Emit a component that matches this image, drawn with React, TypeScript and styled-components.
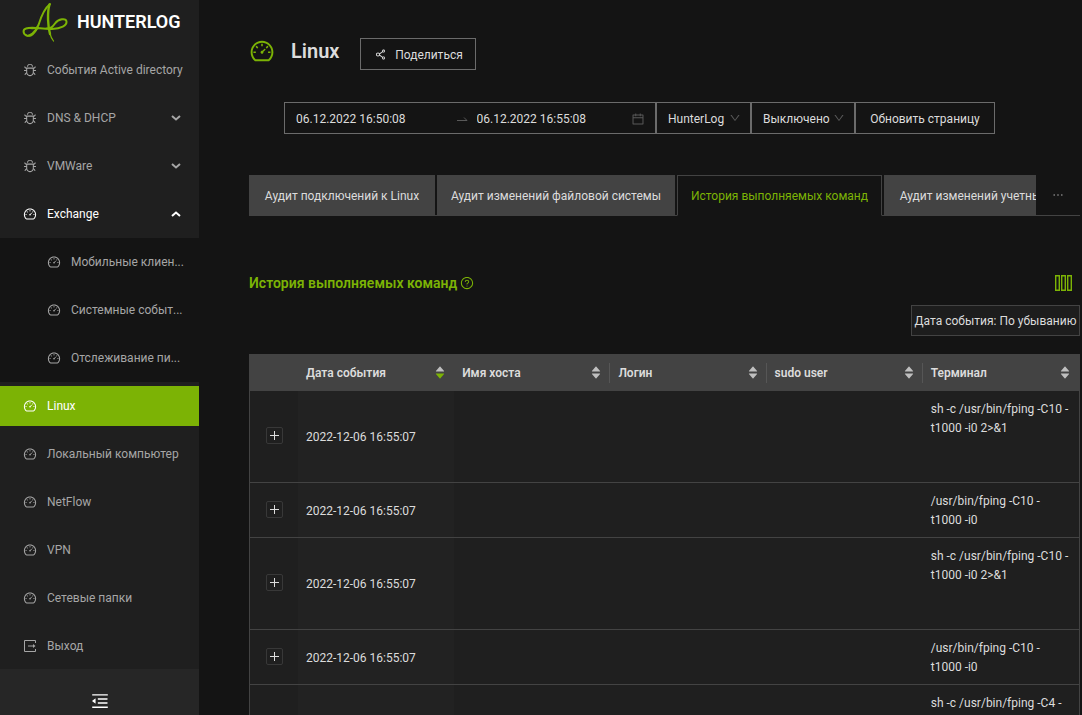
import React from "react";
import styled, { createGlobalStyle, css } from "styled-components";
import {
  AiFillCaretDown,
  AiFillCaretUp,
  AiOutlineBug,
  AiOutlineCalendar,
  AiOutlineDashboard,
  AiOutlineDown,
  AiOutlineEllipsis,
  AiOutlineMenuFold,
  AiOutlineQuestionCircle,
  AiOutlineShareAlt,
} from "react-icons/ai";

const green = "#7cb305";
const line = "#434343";
const control = "#6b6b6b";
const textColor = "#dcdcdc";

const GlobalStyle = createGlobalStyle`
  *, *::before, *::after { box-sizing: border-box; }
  body {
    margin: 0;
    background: #141414;
    color: ${textColor};
    font: 12px/20px Roboto, "Open Sans", sans-serif;
  }
  button, input, select { font: inherit; color: inherit; }
  button { cursor: pointer; }
  svg { display: block; flex: none; }
`;

const Page = styled.div`
  display: flex;
  height: 100vh;
  overflow: hidden;
`;

/* Sidebar */

const Sidebar = styled.aside`
  flex: none;
  display: flex;
  flex-direction: column;
  width: 199px;
  background: #1f1f1f;
`;

const Brand = styled.a`
  flex: none;
  display: flex;
  align-items: center;
  gap: 8px;
  height: 46px;
  padding: 0 0 2px 22px;
  color: #fff;
  font-size: 18px;
  font-weight: 600;
  text-decoration: none;
`;

const Menu = styled.ul`
  flex: none;
  margin: 0;
  padding: 0;
  list-style: none;
`;

const SubMenu = styled(Menu)`
  background: #141414;
`;

const MenuItem = styled.a<{ $nested?: boolean; $active?: boolean; $open?: boolean }>`
  display: flex;
  align-items: center;
  gap: 10px;
  height: 40px;
  padding: 0 18px 0 ${(p) => (p.$nested ? 47 : 23)}px;
  border-top: 4px solid transparent;
  border-bottom: 4px solid transparent;
  box-sizing: content-box;
  background: ${(p) => (p.$active ? green : "transparent")};
  background-clip: padding-box;
  color: ${(p) => (p.$active || p.$open ? "#fff" : "#a6a6a6")};
  text-decoration: none;
  white-space: nowrap;
`;

const MenuLabel = styled.span`
  flex: 1;
`;

const Collapse = styled.button`
  flex: none;
  display: flex;
  align-items: center;
  justify-content: center;
  height: 64px;
  margin-top: -1px;
  padding: 0;
  border: 0;
  background: #262626;
  color: #fff;
`;

/* Main column */

const Main = styled.main`
  flex: 1;
  min-width: 0;
  padding: 38px 2px 0 50px;
`;

const TitleRow = styled.header`
  display: flex;
  align-items: center;
  height: 32px;
`;

const PageTitle = styled.h1`
  margin: 0 21px 6px 16px;
  font-size: 20px;
  line-height: 26px;
  font-weight: 600;
`;

const TitleIcon = styled.span`
  margin-bottom: 6px;
  color: ${green};
`;

const Button = styled.button<{ $width: number }>`
  display: flex;
  align-items: center;
  justify-content: center;
  gap: 8px;
  width: ${(p) => p.$width}px;
  height: 32px;
  padding: 1px 0 0;
  border: 1px solid ${control};
  background: transparent;
  white-space: nowrap;
`;

const Filters = styled.form`
  display: flex;
  margin: 32px 0 0 35px;
`;

const RangePicker = styled.div`
  display: flex;
  align-items: center;
  width: 372px;
  height: 32px;
  padding: 1px 10px 0 11px;
  border: 1px solid ${control};
  color: #595959;
`;

const DateInput = styled.input`
  flex: 1;
  min-width: 0;
  padding: 0;
  border: 0;
  outline: 0;
  background: transparent;
  color: ${textColor};
`;

const Arrow = styled.span`
  padding: 0 9px 0 5px;
`;

const SelectBox = styled.div<{ $width: number }>`
  display: flex;
  position: relative;
  width: ${(p) => p.$width}px;
  height: 32px;
  color: #595959;

  select {
    width: 100%;
    padding: 1px 11px 0;
    border: 1px solid ${control};
    border-radius: 0;
    outline: 0;
    appearance: none;
    background: transparent;
    color: ${textColor};
  }

  svg {
    position: absolute;
    top: 10px;
    right: 10px;
    pointer-events: none;
  }
`;

const TabBar = styled.div`
  display: flex;
  height: 41px;
  margin-top: 41px;
  border-bottom: 1px solid ${line};
`;

const Tabs = styled.div`
  flex: 1;
  display: flex;
  gap: 2px;
  height: 41px;
  min-width: 0;
  overflow: hidden;
`;

const Tab = styled.button<{ $width: number; $active?: boolean }>`
  flex: none;
  width: ${(p) => p.$width}px;
  height: 41px;
  padding: 1px 0 0;
  border: 1px solid ${line};
  background: ${line};
  white-space: nowrap;
  ${(p) =>
    p.$active &&
    css`
      border-bottom-color: #141414;
      background: #141414;
      color: ${green};
    `}
`;

const MoreTabs = styled.button`
  display: flex;
  align-items: center;
  justify-content: center;
  width: 44px;
  padding: 0;
  border: 0;
  background: transparent;
  color: #a6a6a6;
`;

const SectionHead = styled.div`
  display: flex;
  align-items: center;
  justify-content: space-between;
  height: 20px;
  margin-top: 57px;
  padding-right: 8px;
  color: ${green};
`;

const SectionTitle = styled.h2`
  display: flex;
  align-items: center;
  gap: 3px;
  margin: 0;
  font-size: 14px;
  font-weight: 600;
  white-space: nowrap;
`;

const IconButton = styled.button`
  padding: 0;
  border: 0;
  background: transparent;
`;

const SortRow = styled.div`
  display: flex;
  justify-content: flex-end;
  margin: 12px 0 18px;
`;

const SortTag = styled.button`
  width: 169px;
  height: 31px;
  padding: 1px 0 0;
  border: 1px solid ${line};
  background: #1d1d1d;
  white-space: nowrap;
`;

/* Table */

const Table = styled.table`
  width: 100%;
  table-layout: fixed;
  border-collapse: separate;
  border-spacing: 0;
  border: solid ${line};
  border-width: 0 1px;
  background: #1f1f1f;
  line-height: 19px;
`;

const HeadCell = styled.th<{ $divided?: boolean; $narrow?: boolean }>`
  width: ${(p) => (p.$narrow ? "48px" : "auto")};
  height: 37px;
  padding: 0;
  background: ${line};
  font-weight: 600;
  line-height: 20px;
  text-align: left;

  > div {
    display: flex;
    align-items: center;
    justify-content: space-between;
    height: 20px;
    padding: 0 7px 0 8px;
    border-right: 1px solid ${(p) => (p.$divided ? "#565656" : "transparent")};
  }
`;

const Sorter = styled.button`
  display: flex;
  flex-direction: column;
  align-items: center;
  padding: 0;
  border: 0;
  background: transparent;
  color: #bfbfbf;

  svg + svg {
    margin-top: -5px;
  }
`;

const Row = styled.tr<{ $tall?: boolean }>`
  height: ${(p) => (p.$tall ? 92 : 55)}px;
`;

const Cell = styled.td<{ $sorted?: boolean }>`
  padding: 9px 8px 7px;
  border-bottom: 1px solid ${line};
  background: ${(p) => (p.$sorted ? "#222" : "transparent")};
`;

const ExpandCell = styled(Cell)`
  padding: 7px 8px 9px;
`;

const CommandCell = styled(Cell)`
  vertical-align: top;
  white-space: pre-line;
`;

const Expand = styled.button`
  display: flex;
  align-items: center;
  justify-content: center;
  width: 17px;
  height: 17px;
  margin: 0 auto;
  padding: 0;
  border: 1px solid #383838;
  border-radius: 2px;
  background: transparent;
`;

const Logo = () => (
  <svg width="47" height="42" viewBox="0 0 47 42" fill="none" stroke={green} strokeLinecap="round">
    <path strokeWidth="2" d="M28 3C23 7 19.500 14 16.500 24C13 32 8 35.500 4.500 34.500C.8 33 .6 28.500 4 27.500C11 25 20 28.500 30 28C39 27.500 45 24.500 44.500 20.500C44 17 36.500 17.500 33 22.500C30.500 26 29 27.500 24 27.500" />
    <path strokeWidth="1.200" d="M15 26C13.500 28.500 11 27.500 8 27.500M4 34C9 37.500 13 32 16 27" />
    <path strokeWidth="2.400" d="M27.500 3.500C25 12 26 26 28 33" />
    <path strokeWidth="1.200" d="M27.500 31C28.500 35 29.500 37.500 31.500 40" />
  </svg>
);

const Chevron = ({ up }: { up?: boolean }) => (
  <svg width="10" height="6" viewBox="0 0 10 6" fill="none" stroke="currentColor" strokeWidth="2">
    <path d={up ? "M1 5L5 1.500L9 5" : "M1 1L5 4.500L9 1"} />
  </svg>
);

const PlusIcon = () => (
  <svg width="9" height="9" viewBox="0 0 9 9" stroke="currentColor">
    <path d="M4.500 0V9M0 4.500H9" />
  </svg>
);

const ExitIcon = () => (
  <svg width="14" height="14" viewBox="0 0 14 14" fill="none" stroke="currentColor">
    <path d="M12.500 4V1.500H1.500V12.500H12.500V10" />
    <path d="M5 7H11" />
    <path d="M10 5L12.500 7L10 9Z" fill="currentColor" stroke="none" />
  </svg>
);

const SwapArrow = () => (
  <svg width="12" height="8" viewBox="0 0 12 8" fill="none" stroke="currentColor">
    <path d="M1 5.500H11L8 2.500" />
  </svg>
);

const ColumnsIcon = () => (
  <svg width="17" height="16" viewBox="0 0 17 16" fill="none" stroke="currentColor" strokeWidth="1.400">
    <path d="M.7 .7H4.300V15.300H.7ZM6.700 .7H10.300V15.300H6.700ZM12.700 .7H16.300V15.300H12.700Z" />
  </svg>
);

const exchangeItems = ["Мобильные клиен...", "Системные событ...", "Отслеживание пи..."];
const lowerItems = ["Локальный компьютер", "NetFlow", "VPN", "Сетевые папки"];
const columns = ["Дата события", "Имя хоста", "Логин", "sudo user", "Терминал"];

const rows = [
  { tall: true, command: "sh -c /usr/bin/fping -C10 -\nt1000 -i0 2>&1" },
  { tall: false, command: "/usr/bin/fping -C10 -\nt1000 -i0" },
  { tall: true, command: "sh -c /usr/bin/fping -C10 -\nt1000 -i0 2>&1" },
  { tall: false, command: "/usr/bin/fping -C10 -\nt1000 -i0" },
  { tall: true, command: "sh -c /usr/bin/fping -C4 -" },
];

export default function App() {
  return (
    <Page>
      <GlobalStyle />
      <Sidebar>
        <Brand href="#">
          <Logo />
          HUNTERLOG
        </Brand>
        <Menu>
          <li>
            <MenuItem href="#">
              <AiOutlineBug size={14} />
              <MenuLabel>События Active directory</MenuLabel>
            </MenuItem>
          </li>
          {["DNS & DHCP", "VMWare"].map((label) => (
            <li key={label}>
              <MenuItem href="#">
                <AiOutlineBug size={14} />
                <MenuLabel>{label}</MenuLabel>
                <Chevron />
              </MenuItem>
            </li>
          ))}
          <li>
            <MenuItem href="#" $open>
              <AiOutlineDashboard size={14} />
              <MenuLabel>Exchange</MenuLabel>
              <Chevron up />
            </MenuItem>
            <SubMenu>
              {exchangeItems.map((label) => (
                <li key={label}>
                  <MenuItem href="#" $nested>
                    <AiOutlineDashboard size={14} />
                    <MenuLabel>{label}</MenuLabel>
                  </MenuItem>
                </li>
              ))}
            </SubMenu>
          </li>
          <li>
            <MenuItem href="#" $active>
              <AiOutlineDashboard size={14} />
              <MenuLabel>Linux</MenuLabel>
            </MenuItem>
          </li>
          {lowerItems.map((label) => (
            <li key={label}>
              <MenuItem href="#">
                <AiOutlineDashboard size={14} />
                <MenuLabel>{label}</MenuLabel>
              </MenuItem>
            </li>
          ))}
          <li>
            <MenuItem href="#">
              <ExitIcon />
              <MenuLabel>Выход</MenuLabel>
            </MenuItem>
          </li>
        </Menu>
        <Collapse type="button" aria-label="Свернуть меню">
          <AiOutlineMenuFold size={20} />
        </Collapse>
      </Sidebar>

      <Main>
        <TitleRow>
          <TitleIcon>
            <AiOutlineDashboard size={26} />
          </TitleIcon>
          <PageTitle>Linux</PageTitle>
          <Button type="button" $width={116}>
            <AiOutlineShareAlt size={13} />
            Поделиться
          </Button>
        </TitleRow>

        <Filters onSubmit={(e) => e.preventDefault()}>
          <RangePicker>
            <DateInput aria-label="Начало периода" defaultValue="06.12.2022 16:50:08" />
            <Arrow>
              <SwapArrow />
            </Arrow>
            <DateInput aria-label="Конец периода" defaultValue="06.12.2022 16:55:08" />
            <AiOutlineCalendar size={14} />
          </RangePicker>
          <SelectBox $width={95}>
            <select aria-label="Источник">
              <option>HunterLog</option>
            </select>
            <AiOutlineDown size={12} />
          </SelectBox>
          <SelectBox $width={104}>
            <select aria-label="Автообновление">
              <option>Выключено</option>
            </select>
            <AiOutlineDown size={12} />
          </SelectBox>
          <Button type="submit" $width={140}>
            Обновить страницу
          </Button>
        </Filters>

        <TabBar>
          <Tabs role="tablist">
            <Tab role="tab" $width={186}>Аудит подключений к Linux</Tab>
            <Tab role="tab" $width={238}>Аудит изменений файловой системы</Tab>
            <Tab role="tab" aria-selected $width={205} $active>История выполняемых команд</Tab>
            <Tab role="tab" $width={228}>Аудит изменений учетных записей</Tab>
          </Tabs>
          <MoreTabs type="button" aria-label="Ещё">
            <AiOutlineEllipsis size={14} />
          </MoreTabs>
        </TabBar>

        <SectionHead>
          <SectionTitle>
            История выполняемых команд
            <AiOutlineQuestionCircle size={14} />
          </SectionTitle>
          <IconButton type="button" aria-label="Столбцы">
            <ColumnsIcon />
          </IconButton>
        </SectionHead>
        <SortRow>
          <SortTag type="button">Дата события: По убыванию</SortTag>
        </SortRow>

        <Table>
          <thead>
            <tr>
              <HeadCell $narrow />
              {columns.map((name, i) => (
                <HeadCell key={name} $divided={i > 0 && i < columns.length - 1}>
                  <div>
                    {name}
                    <Sorter type="button" aria-label={`Сортировать: ${name}`}>
                      <AiFillCaretUp size={12} />
                      <AiFillCaretDown size={12} color={i === 0 ? green : undefined} />
                    </Sorter>
                  </div>
                </HeadCell>
              ))}
            </tr>
          </thead>
          <tbody>
            {rows.map((row, i) => (
              <Row key={i} $tall={row.tall}>
                <ExpandCell>
                  <Expand type="button" aria-label="Развернуть строку">
                    <PlusIcon />
                  </Expand>
                </ExpandCell>
                <Cell $sorted>2022-12-06 16:55:07</Cell>
                <Cell />
                <Cell />
                <Cell />
                <CommandCell>{row.command}</CommandCell>
              </Row>
            ))}
          </tbody>
        </Table>
      </Main>
    </Page>
  );
}
